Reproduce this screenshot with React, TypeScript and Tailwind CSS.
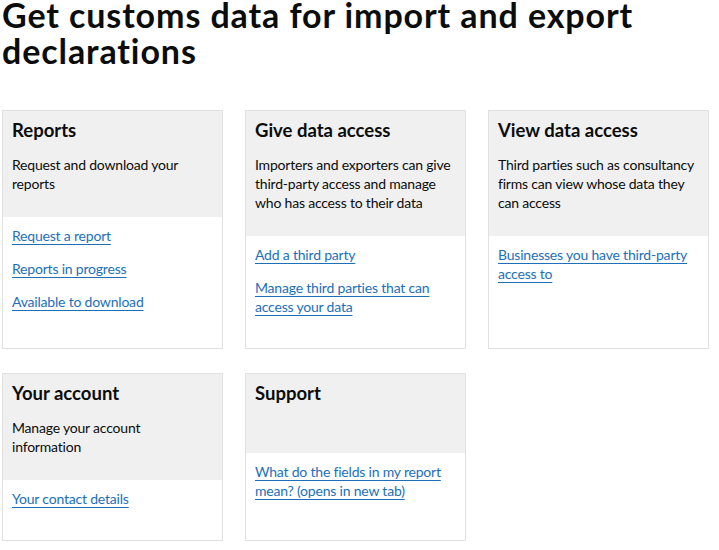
import React from "react";

type Card = {
  title: string;
  body?: string;
  links: string[];
};

const rows: Card[][] = [
  [
    {
      title: "Reports",
      body: "Request and download your reports",
      links: ["Request a report", "Reports in progress", "Available to download"],
    },
    {
      title: "Give data access",
      body: "Importers and exporters can give third-party access and manage who has access to their data",
      links: ["Add a third party", "Manage third parties that can access your data"],
    },
    {
      title: "View data access",
      body: "Third parties such as consultancy firms can view whose data they can access",
      links: ["Businesses you have third-party access to"],
    },
  ],
  [
    {
      title: "Your account",
      body: "Manage your account\ninformation",
      links: ["Your contact details"],
    },
    {
      title: "Support",
      links: ["What do the fields in my report mean? (opens in new tab)"],
    },
  ],
];

function ServiceCard({ card }: { card: Card }) {
  return (
    <div className="flex flex-col border border-[#e1e1e1] bg-white">
      <div className="bg-[#f0f0f0] px-[9px] pt-[7px] pb-[24px]">
        <h2 className="text-[18.5px] font-bold leading-[25px] text-[#0b0c0c]">{card.title}</h2>
        {card.body ? (
          <p className="mt-[12px] whitespace-pre-line text-[14px] leading-[19px] tracking-[-0.2px] text-[#0b0c0c]">
            {card.body}
          </p>
        ) : (
          <div className="h-[23px]" />
        )}
      </div>
      <ul className="flex flex-col gap-[14px] px-[9px] pt-[9px] pb-[32px]">
        {card.links.map((l) => (
          <li key={l} className="text-[14px] leading-[19px] tracking-[-0.2px]">
            <a href="#" className="text-[#1d70b8] underline decoration-1 underline-offset-[3px]">
              {l}
            </a>
          </li>
        ))}
      </ul>
    </div>
  );
}

export default function App() {
  return (
    <div className="min-h-screen bg-white px-[2px] font-['Lato',sans-serif] text-[#0b0c0c]">
      <h1 className="-mt-[3px] text-[34px] font-bold leading-[36px] tracking-[0.9px]">
        Get customs data for import and export declarations
      </h1>
      <div className="mt-[41px] flex w-[707px] flex-col gap-[24px]">
        {rows.map((row, i) => (
          <div key={i} className="grid grid-cols-3 gap-[22px]">
            {row.map((c) => (
              <ServiceCard key={c.title} card={c} />
            ))}
          </div>
        ))}
      </div>
    </div>
  );
}
